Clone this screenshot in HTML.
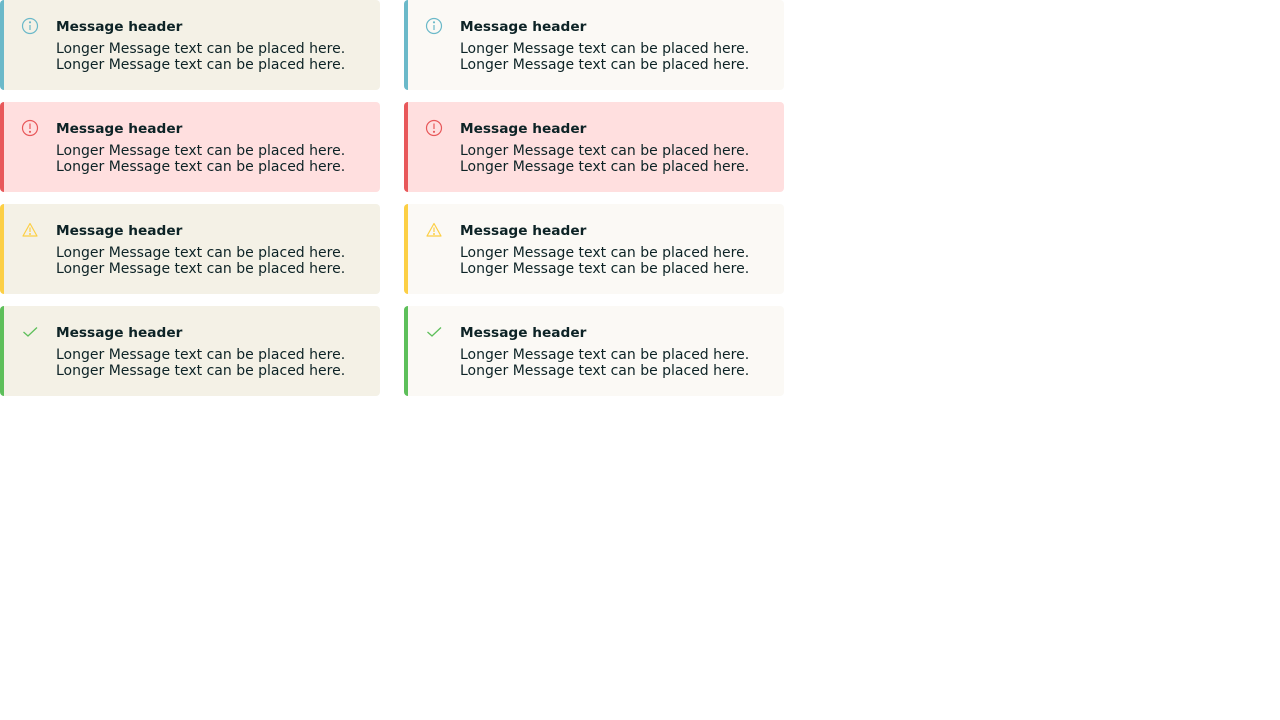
<!DOCTYPE html>
<html><head><style>
body{margin:0;background:#fff;font-family:"DejaVu Sans","Liberation Sans",sans-serif;color:#0d2326}
.b{position:absolute;width:376px;height:90px;border-left:4px solid;border-radius:4px;box-sizing:content-box}
.b svg{position:absolute;left:17px;top:17px}
.h{position:absolute;left:52px;top:19px;font-weight:bold;font-size:13.7px;line-height:16px}
.t{position:absolute;left:52px;top:41px;font-size:14px;line-height:16px;white-space:nowrap}
.a{background:#f4f1e6}.c{background:#fbf9f5}.e{background:#ffdfdf;border-color:#e8585a}
.i{border-color:#6bb9c9}.w{border-color:#fccf45}.s{border-color:#5dbf5a}
</style></head><body>
<div class="b a i" style="left:0;top:0"></div>
<div class="b c i" style="left:404px;top:0"></div>
<div class="b e" style="left:0;top:102px"></div>
<div class="b e" style="left:404px;top:102px"></div>
<div class="b a w" style="left:0;top:204px"></div>
<div class="b c w" style="left:404px;top:204px"></div>
<div class="b a s" style="left:0;top:306px"></div>
<div class="b c s" style="left:404px;top:306px"></div>
<script>
var icons=[
'<svg width="18" height="18" viewBox="0 0 18 18" fill="none" stroke="#6bb9c9" stroke-width="1.2"><circle cx="9" cy="9" r="7.5"/><line x1="9" y1="8" x2="9" y2="13"/><circle cx="9" cy="5.3" r=".5" fill="#6bb9c9"/></svg>',
'<svg width="18" height="18" viewBox="0 0 18 18" fill="none" stroke="#e8585a" stroke-width="1.2"><circle cx="9" cy="9" r="7.5"/><line x1="9" y1="4.5" x2="9" y2="10"/><circle cx="9" cy="12.8" r=".5" fill="#e8585a"/></svg>',
'<svg width="18" height="18" viewBox="0 0 18 18" fill="none" stroke="#fccf45" stroke-width="1.2"><path d="M9 2.5L16 15H2Z" stroke-linejoin="round"/><line x1="9" y1="6.5" x2="9" y2="11"/><circle cx="9" cy="13" r=".4" fill="#fccf45"/></svg>',
'<svg width="18" height="18" viewBox="0 0 18 18" fill="none" stroke="#5dbf5a" stroke-width="1.3"><path d="M2.5 9L7 13L16 4.5"/></svg>'];
var bs=document.querySelectorAll('.b');
bs.forEach(function(b,k){b.innerHTML=icons[k>>1]+'<div class="h">Message header</div><div class="t">Longer Message text can be placed here.<br>Longer Message text can be placed here.</div>';});
</script>
</body></html>
